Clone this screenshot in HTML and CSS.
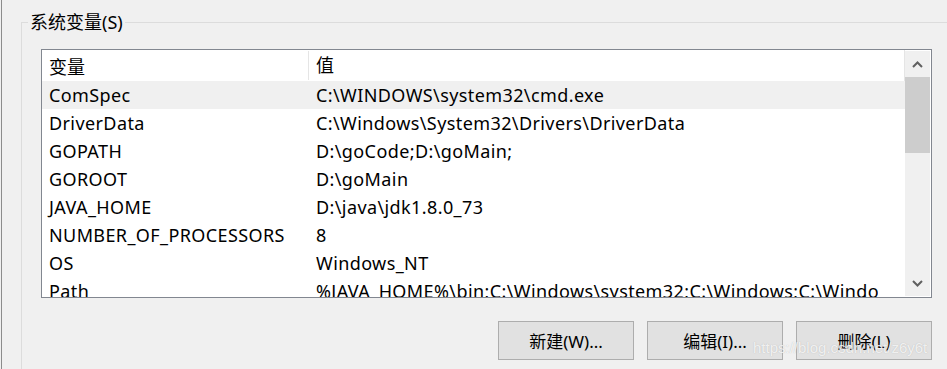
FILE: index.html
```html
<!DOCTYPE html>
<html lang="zh-CN">

<head>
    <meta charset="UTF-8">
    <title>系统变量</title>
    <link rel="stylesheet" href="styles.css">
</head>

<body>

    <div class="page">
        <div class="group">
            <div class="group-title">系统变量(S)</div>

            <div class="listbox">
                <div class="list">
                    <div class="row head">
                        <div class="col name">变量</div>
                        <div class="col value">值</div>
                    </div>
                    <div class="row hover">
                        <div class="col name">ComSpec</div>
                        <div class="col value">C:\WINDOWS\system32\cmd.exe</div>
                    </div>
                    <div class="row">
                        <div class="col name">DriverData</div>
                        <div class="col value">C:\Windows\System32\Drivers\DriverData</div>
                    </div>
                    <div class="row">
                        <div class="col name">GOPATH</div>
                        <div class="col value">D:\goCode;D:\goMain;</div>
                    </div>
                    <div class="row">
                        <div class="col name">GOROOT</div>
                        <div class="col value">D:\goMain</div>
                    </div>
                    <div class="row">
                        <div class="col name">JAVA_HOME</div>
                        <div class="col value">D:\java\jdk1.8.0_73</div>
                    </div>
                    <div class="row">
                        <div class="col name">NUMBER_OF_PROCESSORS</div>
                        <div class="col value">8</div>
                    </div>
                    <div class="row">
                        <div class="col name">OS</div>
                        <div class="col value">Windows_NT</div>
                    </div>
                    <div class="row">
                        <div class="col name">Path</div>
                        <div class="col value">%JAVA_HOME%\bin;C:\Windows\system32;C:\Windows;C:\Windows\System32\Wbem</div>
                    </div>
                </div>

                <div class="scrollbar">
                    <div class="arrow">
                        <svg width="11" height="7" viewBox="0 0 11 7"><polyline points="1,6 5.5,1.5 10,6" fill="none" stroke="#606060" stroke-width="2"/></svg>
                    </div>
                    <div class="thumb"></div>
                    <div class="track"></div>
                    <div class="arrow">
                        <svg width="11" height="7" viewBox="0 0 11 7"><polyline points="1,1 5.5,5.5 10,1" fill="none" stroke="#606060" stroke-width="2"/></svg>
                    </div>
                </div>
            </div>

            <div class="buttons">
                <button>新建(W)...</button>
                <button>编辑(I)...</button>
                <button>删除(L)</button>
            </div>
        </div>
    </div>

    <div class="watermark">https://blog.csdn.net/z6y6t</div>

</body>

</html>
```

FILE: styles.css
```css
html,
body {
    height: 100%;
    margin: 0;
}

body {
    background: #f0f0f0;
    font-family: "Noto Sans", "Noto Sans CJK SC", sans-serif;
    font-size: 18px;
    letter-spacing: 0.4px;
    color: #000;
    padding-left: 1px;
    box-sizing: border-box;
    overflow: hidden;
}

.page {
    height: 100%;
    border-left: 1px solid #8c8c8c;
    padding-left: 19px;
    padding-top: 22px;
    box-sizing: border-box;
}

.group {
    border-top: 1px solid #dcdcdc;
    border-left: 1px solid #dcdcdc;
    height: 100%;
}

.group-title {
    width: max-content;
    margin-top: -12px;
    margin-left: 6px;
    padding: 0 2px;
    background: #f0f0f0;
    line-height: 22px;
    letter-spacing: 0;
}

.listbox {
    display: flex;
    width: 891px;
    height: 249px;
    box-sizing: border-box;
    margin-top: 16px;
    margin-left: 19px;
    border: 1px solid #828790;
    padding: 0 1px 0 0;
    background: #fff;
    overflow: hidden;
}

.list {
    flex: 1;
    overflow: hidden;
}

.row {
    display: flex;
    height: 28px;
    align-items: center;
    white-space: nowrap;
}

.row.head {
    height: 31px;
    border-right: 1px solid #e5e5e5;
}

.row.hover {
    background: #f0f0f0;
}

.col {
    overflow: hidden;
}

.col.name {
    width: 266px;
    padding-left: 7px;
    box-sizing: border-box;
    flex-shrink: 0;
}

.col.value {
    flex: 0 0 562px;
    padding-left: 8px;
}

.head .col.name {
    letter-spacing: 0;
}

.head .col.value {
    flex: 1;
    border-left: 1px solid #e5e5e5;
    padding-left: 7px;
    line-height: 29px;
}

.scrollbar {
    width: 25px;
    margin-top: 1px;
    margin-bottom: 1px;
    background: #f0f0f0;
    display: flex;
    flex-direction: column;
}

.arrow {
    height: 26px;
    display: flex;
    justify-content: center;
    align-items: center;
}

.thumb {
    height: 76px;
    background: #cdcdcd;
}

.track {
    flex: 1;
}

.buttons {
    display: flex;
    gap: 13px;
    justify-content: flex-end;
    width: 910px;
    margin-top: 23px;
}

button {
    width: 136px;
    height: 39px;
    background: #e1e1e1;
    border: 1px solid #adadad;
    font-family: "Noto Sans", "Noto Sans CJK SC", sans-serif;
    font-size: 17px;
    color: #000;
    padding: 0;
}

.watermark {
    position: absolute;
    left: 753px;
    top: 339px;
    font-family: "Liberation Sans", sans-serif;
    font-size: 15px;
    letter-spacing: 0;
    color: rgba(255, 255, 255, 0.8);
    text-shadow: 0 0 1px rgba(150, 150, 150, 0.6);
}
```
